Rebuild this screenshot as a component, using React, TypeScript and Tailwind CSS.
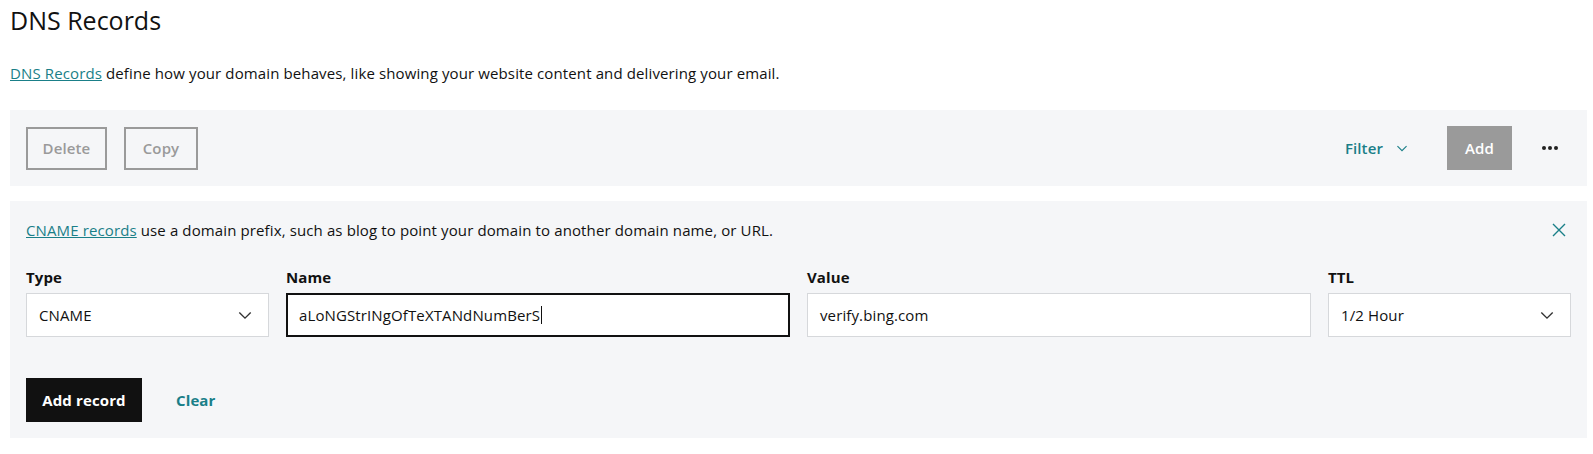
import React from "react";

const Chevron = ({ className = "" }: { className?: string }) => (
  <svg viewBox="0 0 16 10" className={className} fill="none" stroke="currentColor" strokeWidth="1.6">
    <path d="M1.5 1.5 L8 8 L14.5 1.5" />
  </svg>
);

export default function App() {
  return (
    <div className="min-h-[454px] bg-white pl-[10px] pr-[6px] pt-[5px] text-[15px] tracking-[0.12px] text-[#111111]" style={{ fontFamily: '"Open Sans", Arial, sans-serif' }}>
      <h1 className="text-[25px] leading-[30px] font-normal tracking-normal text-[#111111]">DNS Records</h1>
      <p className="mt-[28px] leading-[20px] text-[15px] text-[#111111]">
        <a href="#" className="text-[#1a7f88] underline">DNS Records</a> define how your domain behaves, like showing your website content and delivering your email.
      </p>

      <div className="mt-[27px] flex items-center bg-[#f5f6f8] px-[16px] py-[16px]">
        <button className="h-[43px] w-[81px] border-2 border-[#9a9a9a] text-[15px] font-semibold text-[#9a9a9a]">Delete</button>
        <button className="ml-[17px] h-[43px] w-[74px] border-2 border-[#9a9a9a] text-[15px] font-semibold text-[#9a9a9a]">Copy</button>
        <div className="flex-1" />
        <button className="flex items-center gap-[13px] text-[15px] font-semibold text-[#1a7f88]">
          Filter
          <Chevron className="h-[7px] w-[12px]" />
        </button>
        <button className="ml-[39px] h-[44px] w-[65px] bg-[#9a9a9a] text-[15px] font-semibold text-white">Add</button>
        <div className="ml-[30px] mr-[13px] flex items-center gap-[2px]">
          <span className="h-[4px] w-[4px] rounded-full bg-[#222]" />
          <span className="h-[4px] w-[4px] rounded-full bg-[#222]" />
          <span className="h-[4px] w-[4px] rounded-full bg-[#222]" />
        </div>
      </div>

      <div className="mt-[15px] bg-[#f5f6f8] px-[16px] pt-[19px] pb-[16px]">
        <div className="flex items-center justify-between">
          <p className="leading-[20px] text-[15px] text-[#111111]">
            <a href="#" className="text-[#1a7f88] underline">CNAME records</a> use a domain prefix, such as blog to point your domain to another domain name, or URL.
          </p>
          <svg viewBox="0 0 14 14" className="mr-[5px] h-[14px] w-[14px] text-[#1a7f88]" fill="none" stroke="currentColor" strokeWidth="1.4">
            <path d="M1 1 L13 13 M13 1 L1 13" />
          </svg>
        </div>

        <div className="mt-[27px] grid grid-cols-[243px_504px_504px_243px] gap-x-[17px]">
          <label className="text-[15px] font-bold leading-[20px] text-[#111]">Type</label>
          <label className="text-[15px] font-bold leading-[20px] text-[#111]">Name</label>
          <label className="text-[15px] font-bold leading-[20px] text-[#111]">Value</label>
          <label className="text-[15px] font-bold leading-[20px] text-[#111]">TTL</label>

          <div className="mt-[6px] flex h-[44px] items-center justify-between border border-[#d6d8db] bg-white pl-[12px] pr-[16px]">
            <span>CNAME</span>
            <Chevron className="h-[9px] w-[14px] text-[#333]" />
          </div>
          <div className="mt-[6px] flex h-[44px] items-center border-2 border-[#111] bg-white pl-[11px]">
            <span>aLoNGStrINgOfTeXTANdNumBerS</span>
            <span className="ml-[1px] h-[18px] w-px bg-[#111]" />
          </div>
          <div className="mt-[6px] flex h-[44px] items-center border border-[#d6d8db] bg-white pl-[12px]">
            <span>verify.bing.com</span>
          </div>
          <div className="mt-[6px] flex h-[44px] items-center justify-between border border-[#d6d8db] bg-white pl-[12px] pr-[16px]">
            <span>1/2 Hour</span>
            <Chevron className="h-[9px] w-[14px] text-[#333]" />
          </div>
        </div>

        <div className="mt-[41px] flex items-center">
          <button className="h-[44px] w-[116px] bg-[#111111] text-[15px] font-bold text-white">Add record</button>
          <button className="ml-[34px] text-[15px] font-bold text-[#1a7f88]">Clear</button>
        </div>
      </div>
    </div>
  );
}
